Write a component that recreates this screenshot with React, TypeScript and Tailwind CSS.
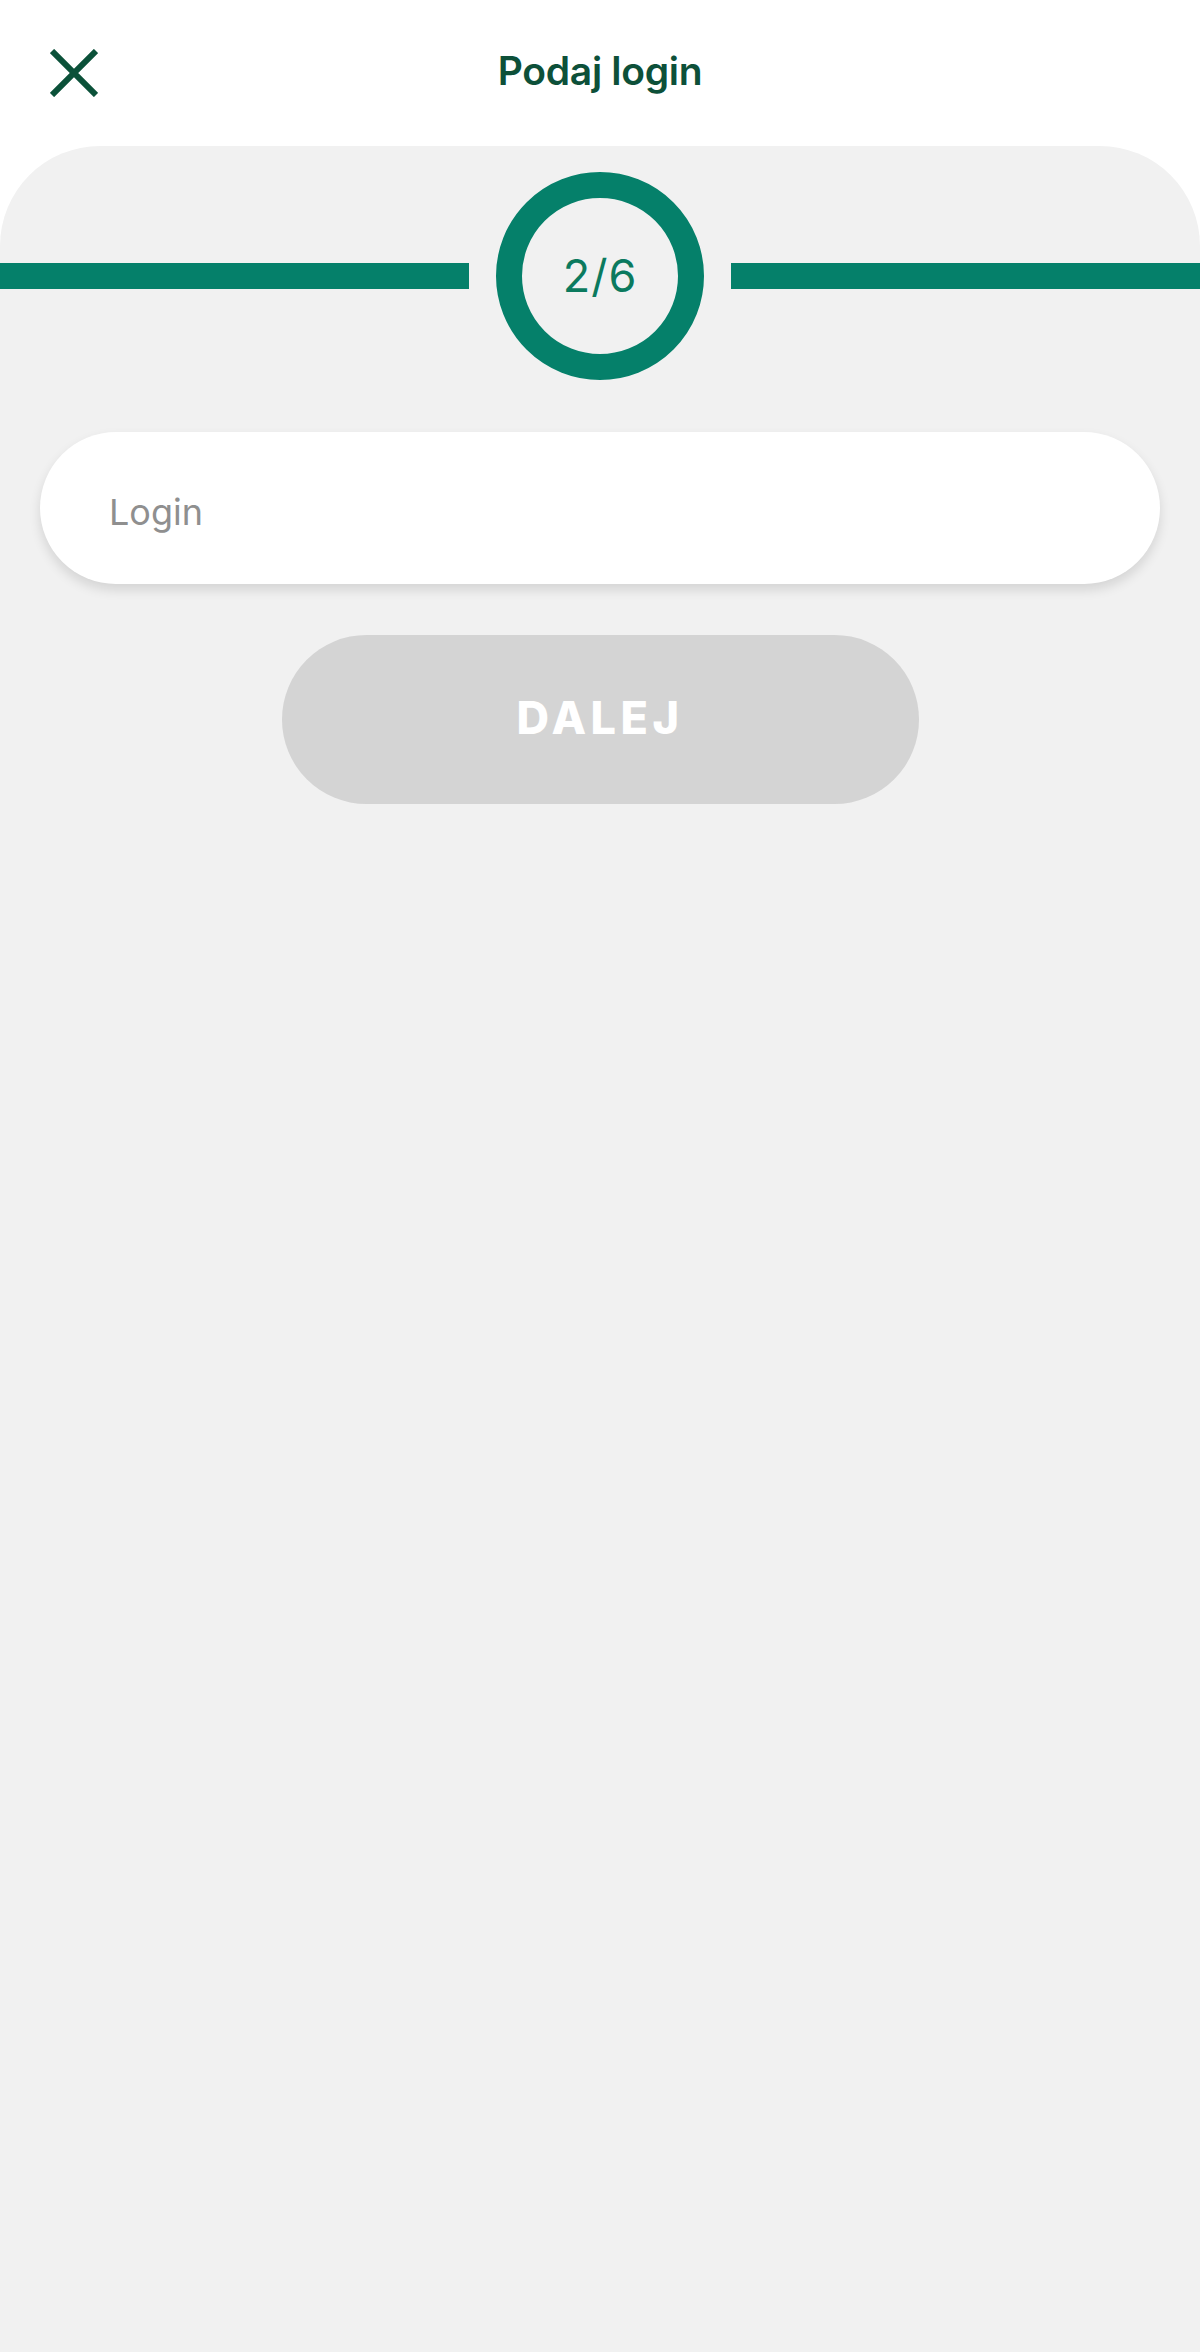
import React, { useState } from 'react';

function CloseIcon() {
  return (
    <svg viewBox="0 0 48 48" className="w-[48px] h-[48px]" fill="none">
      <path d="M2 2 L46 46 M46 2 L2 46" stroke="#0b5139" strokeWidth="6" strokeLinecap="butt" />
    </svg>
  );
}

function StepIndicator({ step, total }: { step: number; total: number }) {
  return (
    <div className="flex items-center gap-[27px] mt-[26px]">
      <div className="flex-1 h-[26px] bg-[#05806a]" />
      <div className="w-[208px] h-[208px] rounded-full border-[26px] border-[#05806a] flex items-center justify-center">
        <span className="text-[45px] leading-none text-[#0b7a5e] tracking-[1px] -mt-[2px]">
          {step}/{total}
        </span>
      </div>
      <div className="flex-1 h-[26px] bg-[#05806a]" />
    </div>
  );
}

export default function App() {
  const [login, setLogin] = useState('');

  return (
    <div
      className="min-h-screen flex flex-col bg-white"
      style={{ fontFamily: 'Inter, "Noto Sans", sans-serif' }}
    >
      {/* Header */}
      <div className="h-[146px] grid grid-cols-[1fr_auto_1fr] items-center px-[50px]">
        <button className="w-[48px] h-[48px] flex items-center justify-center">
          <CloseIcon />
        </button>
        <h1 className="text-[39px] font-semibold text-[#0d5039] tracking-[-0.3px] -mt-[4px]">Podaj login</h1>
        <div />
      </div>

      {/* Content panel */}
      <div className="flex-1 bg-[#f1f1f1] rounded-t-[100px] flex flex-col">
        <StepIndicator step={2} total={6} />

        <div className="mx-[40px] mt-[52px] h-[152px] rounded-full bg-white shadow-[0_6px_12px_rgba(0,0,0,0.12)] flex items-center pl-[69px] pr-[69px] pt-[8px]">
          <input
            value={login}
            onChange={(e) => setLogin(e.target.value)}
            placeholder="Login"
            className="w-full bg-transparent outline-none text-[36px] text-[#333] placeholder:text-[#8f8f8f]"
          />
        </div>

        <button
          disabled={!login}
          className="mx-auto mt-[51px] w-[637px] h-[169px] rounded-full bg-[#d4d4d4] text-white text-[45px] font-extrabold tracking-[0.1em] flex items-center justify-center"
        >
          <span className="-mt-[4px]">DALEJ</span>
        </button>
      </div>
    </div>
  );
}
